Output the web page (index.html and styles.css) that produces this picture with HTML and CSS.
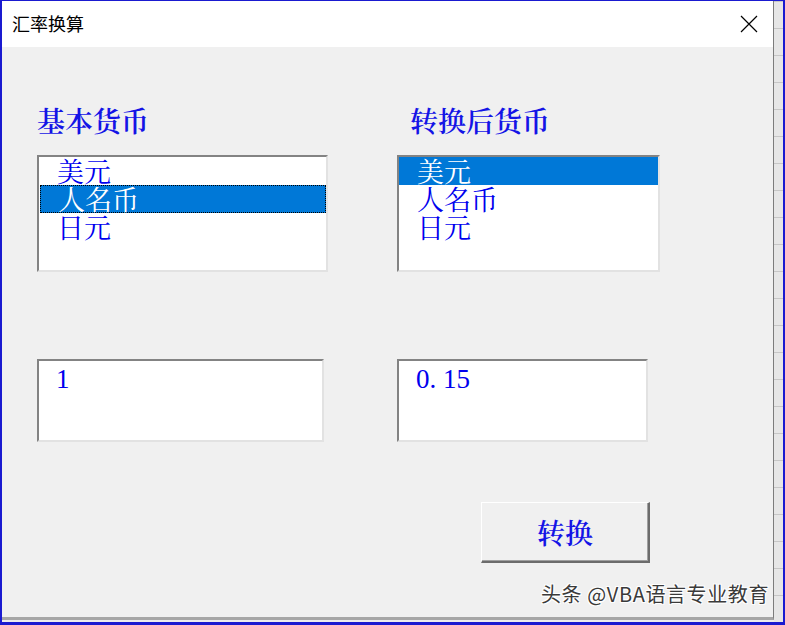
FILE: index.html
```html
<!DOCTYPE html>
<html lang="zh-CN">
<head>
<meta charset="utf-8">
<title>汇率换算</title>
<link rel="stylesheet" href="styles.css">
</head>
<body>
<div class="frame">
  <div class="dialog">
    <div class="titlebar">
      <span class="title">汇率换算</span>
      <svg class="close" width="18" height="18" viewBox="0 0 18 18"><path d="M1 1 L17 17 M17 1 L1 17" stroke="#000" stroke-width="1.2" fill="none"/></svg>
    </div>
    <div class="body">
      <div class="grid">
        <div class="col">
          <div class="label">基本货币</div>
          <div class="listbox lb1">
            <div class="item">美元</div>
            <div class="item sel focus">人名币</div>
            <div class="item">日元</div>
          </div>
          <div class="textbox tb1">1</div>
        </div>
        <div class="col">
          <div class="label label-r">转换后货币</div>
          <div class="listbox lb2">
            <div class="item sel">美元</div>
            <div class="item">人名币</div>
            <div class="item">日元</div>
          </div>
          <div class="textbox tb2">0. 15</div>
          <div class="button">转换</div>
        </div>
      </div>
      <div class="watermark">头条 @VBA语言专业教育</div>
    </div>
  </div>
  <div class="strip"></div>
</div>
</body>
</html>
```
FILE: styles.css
```css
html, body {
  margin: 0;
  padding: 0;
}
body {
  width: 785px;
  height: 625px;
  overflow: hidden;
  background: #ececec;
}
.frame {
  box-sizing: border-box;
  width: 785px;
  height: 625px;
  border-style: solid;
  border-color: #1a1ad0;
  border-width: 1px 2px 3px 2px;
  display: flex;
  align-items: flex-start;
  background: #ececec;
}
.dialog {
  box-sizing: border-box;
  width: 772px;
  height: 619px;
  border-right: 1px solid #7c7c7c;
  border-bottom: 3px solid #a6a6a6;
  display: flex;
  flex-direction: column;
  background: #f0f0f0;
}
.titlebar {
  height: 46px;
  flex: none;
  background: #ffffff;
  display: flex;
  align-items: center;
  justify-content: space-between;
  padding: 0 15px 0 10px;
}
.title {
  font-family: "Noto Sans CJK SC", sans-serif;
  font-size: 18px;
  color: #000;
  margin-top: -2px;
}
.close {
  display: block;
  margin-top: -1px;
}
.body {
  flex: 1;
  display: flex;
  flex-direction: column;
  padding: 57px 0 0 35px;
  font-family: "Noto Serif CJK SC", "Noto Sans CJK SC", serif;
  color: #0000ee;
}
.grid {
  display: grid;
  grid-template-columns: 360px 1fr;
  align-items: start;
}
.col {
  display: flex;
  flex-direction: column;
  align-items: flex-start;
}
.label {
  font-size: 28px;
  line-height: 32px;
  height: 32px;
  font-weight: 600;
  color: #1414e6;
}
.label-r {
  margin-left: 13px;
}
.listbox {
  box-sizing: border-box;
  margin-top: 19px;
  height: 117px;
  background: #ffffff;
  border-style: solid;
  border-width: 2px;
  border-color: #838383 #e2e2e2 #e2e2e2 #838383;
  font-size: 27px;
}
.lb1 { width: 291px; }
.lb2 { width: 263px; }
.item {
  box-sizing: border-box;
  height: 28px;
  line-height: 28px;
  padding-left: 18px;
  color: #0000ee;
  white-space: nowrap;
}
.sel {
  background: #0078d7;
  color: #ffffff;
}
.focus {
  border: 1px dotted #000;
  padding-left: 17px;
  line-height: 26px;
  margin: 0 0 0 1px;
}
.textbox {
  box-sizing: border-box;
  margin-top: 87px;
  height: 83px;
  background: #ffffff;
  border-style: solid;
  border-width: 2px;
  border-color: #838383 #e2e2e2 #e2e2e2 #838383;
  font-family: "Liberation Serif", serif;
  font-size: 27px;
  line-height: 30px;
  padding: 3px 0 0 17px;
  color: #0000ee;
}
.tb1 { width: 287px; }
.tb2 { width: 251px; }
.button {
  box-sizing: border-box;
  margin: 60px 0 0 84px;
  width: 169px;
  height: 61px;
  background: #f0f0f0;
  border-style: solid;
  border-width: 1px 2px 2px 1px;
  border-color: #ffffff #6c6c6c #6c6c6c #ffffff;
  box-shadow: inset -1px -1px 0 #a0a0a0;
  display: flex;
  align-items: center;
  justify-content: center;
  font-size: 28px;
  font-weight: 600;
  color: #1414e6;
}
.watermark {
  align-self: flex-end;
  margin: 18px 4px 0 0;
  font-family: "Noto Sans CJK SC", sans-serif;
  font-size: 20px;
  letter-spacing: 0.6px;
  line-height: 26px;
  color: #3a3a3a;
  text-shadow: 1px 1px 0 #fff, -1px -1px 0 #fff, 1px -1px 0 #fff, -1px 1px 0 #fff;
}
.strip {
  width: 9px;
  height: 100%;
  background-color: #e6e6e6;
  background-image: repeating-linear-gradient(to bottom, transparent 0, transparent 26px, #c6c6c6 26px, #c6c6c6 27px);
  background-position: 0 1px;
}
```
